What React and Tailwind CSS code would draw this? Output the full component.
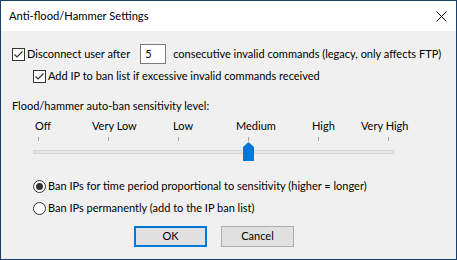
import { useState } from 'react';

const LEVELS = [
  { label: 'Off', left: 2 },
  { label: 'Very Low', left: 59 },
  { label: 'Low', left: 140 },
  { label: 'Medium', left: 203 },
  { label: 'High', left: 279 },
  { label: 'Very High', left: 328 },
];

function CheckBox({ checked }) {
  return (
    <span className="w-[13px] h-[13px] shrink-0 border border-[#333333] bg-white flex items-center justify-center">
      {checked && (
        <svg width="11" height="11" viewBox="0 0 11 11">
          <path d="M1.5 5.5 L4 8 L9.5 2.5" fill="none" stroke="#333333" strokeWidth="1.2" />
        </svg>
      )}
    </span>
  );
}

function Radio({ checked }) {
  return (
    <span className="w-[13px] h-[13px] shrink-0 rounded-full border border-[#333333] bg-white flex items-center justify-center">
      {checked && <span className="w-[7px] h-[7px] rounded-full bg-[#333333]" />}
    </span>
  );
}

function Slider({ value }) {
  return (
    <div className="relative ml-[21px] w-[361px] h-[48px]">
      {/* labels */}
      {LEVELS.map((l) => (
        <span key={l.label} className="absolute top-0 leading-[16px] whitespace-nowrap" style={{ left: l.left }}>
          {l.label}
        </span>
      ))}
      {/* ticks */}
      {LEVELS.map((l, i) => (
        <span
          key={i}
          className="absolute top-[19px] w-px h-[4px] bg-[#a0a0a0]"
          style={{ left: 5 + i * 70 }}
        />
      ))}
      {/* track */}
      <div className="absolute top-[32px] left-0 w-[361px] h-[4px] border border-[#d6d6d6] bg-[#e7e7e7]" />
      {/* thumb */}
      <svg
        className="absolute top-[24px]"
        style={{ left: 5 + value * 70 - 5 }}
        width="11"
        height="19"
        viewBox="0 0 11 19"
      >
        <path d="M0 5 L5.5 0 L11 5 V19 H0 Z" fill="#0078d7" />
      </svg>
    </div>
  );
}

export default function App() {
  const [level] = useState(3);

  return (
    <div
      className="w-[457px] h-[260px] border border-[#1c3e6b] bg-[#f0f0f0] flex flex-col text-[11px] text-black whitespace-nowrap"
      style={{ fontFamily: 'Lato, "Liberation Sans", sans-serif' }}
    >
      {/* Title bar */}
      <div className="h-[30px] bg-white flex items-center justify-between pl-[8px] pr-[9px]">
        <span className="text-[11.2px]">Anti-flood/Hammer Settings</span>
        <svg width="11" height="11" viewBox="0 0 11 11">
          <path d="M0.5 0.5 L10.5 10.5 M10.5 0.5 L0.5 10.5" stroke="#000" strokeWidth="1" />
        </svg>
      </div>

      {/* Body */}
      <div className="flex flex-col pl-[11px]">
        <div className="mt-[13px] h-[20px] flex items-center">
          <CheckBox checked />
          <span className="ml-[2px]">Disconnect user after</span>
          <span className="ml-[10px] w-[26px] h-[20px] shrink-0 border border-[#7a7a7a] bg-white flex items-center pl-[4px]">
            5
          </span>
          <span className="ml-[7px]">consecutive invalid commands (legacy, only affects FTP)</span>
        </div>

        <div className="mt-[6px] h-[13px] flex items-center pl-[21px]">
          <CheckBox checked />
          <span className="ml-[2px]">Add IP to ban list if excessive invalid commands received</span>
        </div>

        <div className="mt-[15px] leading-[16px]">Flood/hammer auto-ban sensitivity level:</div>

        <div className="mt-[4px]">
          <Slider value={level} />
        </div>

        <div className="mt-[14px] h-[13px] flex items-center pl-[21px]">
          <Radio checked />
          <span className="ml-[2px]">Ban IPs for time period proportional to sensitivity (higher = longer)</span>
        </div>

        <div className="mt-[9px] h-[13px] flex items-center pl-[21px]">
          <Radio />
          <span className="ml-[2px]">Ban IPs permanently (add to the IP ban list)</span>
        </div>

        <div className="mt-[11px] flex pl-[122px] gap-[14px]">
          <button className="w-[73px] h-[21px] border-2 border-[#0078d7] bg-[#e1e1e1] flex items-center justify-center">
            OK
          </button>
          <button className="w-[73px] h-[21px] border border-[#adadad] bg-[#e1e1e1] flex items-center justify-center">
            Cancel
          </button>
        </div>
      </div>
    </div>
  );
}
